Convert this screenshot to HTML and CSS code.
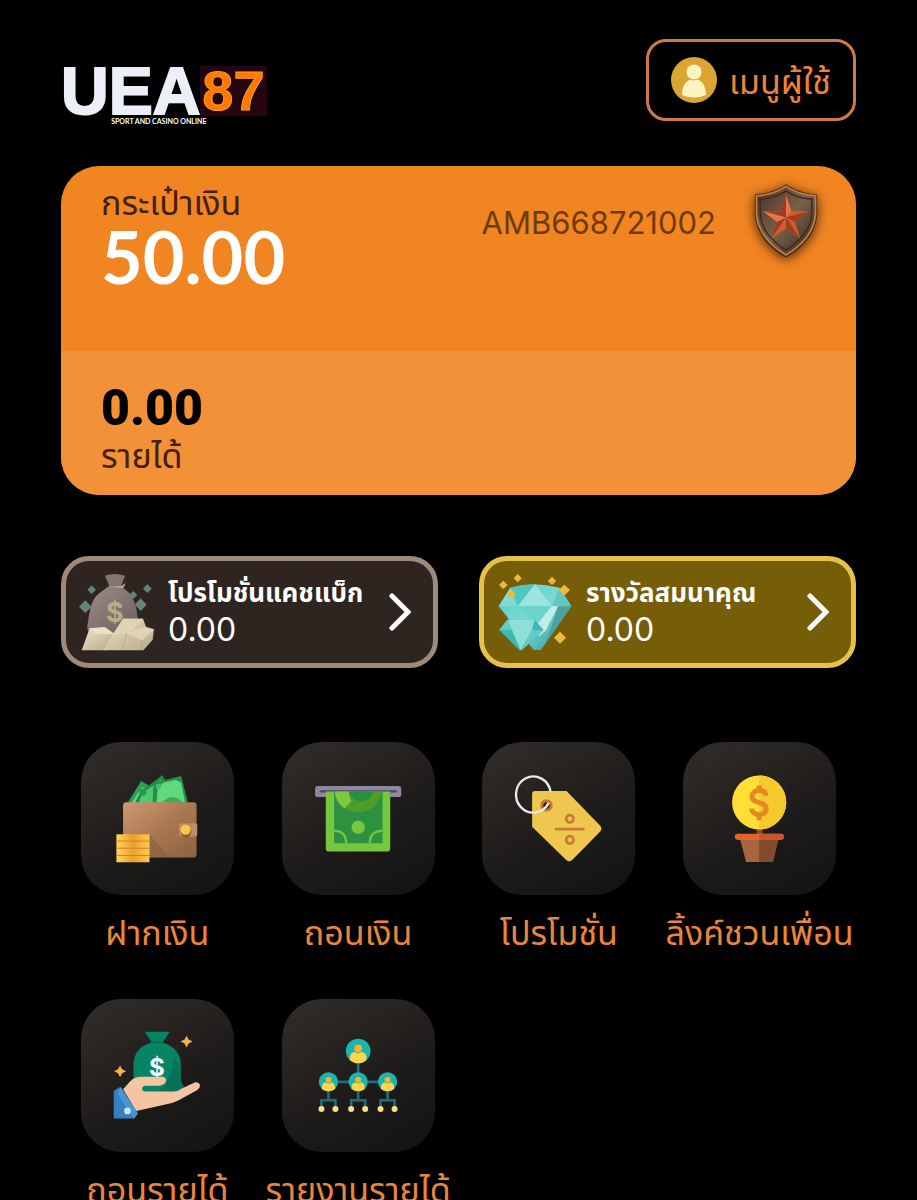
FILE: index.html
```
<!DOCTYPE html>
<html lang="th">
<head>
    <meta charset="UTF-8">
    <meta name="viewport" content="width=device-width, initial-scale=1.0">
    <title>UEA87</title>
    <link rel="stylesheet" href="styles.css">
</head>
<body>
    <header class="top-bar">
        <a class="logo" href="#">
            <span class="logo-name"><span class="logo-uea">UEA</span><span class="logo-num">87</span></span>
            <span class="logo-sub">SPORT AND CASINO ONLINE</span>
        </a>
        <button class="user-menu" type="button">
            <svg class="user-icon" viewBox="0 0 46 46" aria-hidden="true">
                <circle cx="23" cy="23" r="23" fill="#dba531"/>
                <path d="M11 38c0-10 5-16 12-16s12 6 12 16q-12 5-24 0z" fill="#fff3c4"/>
                <circle cx="23" cy="15" r="8" fill="#fff3c4" stroke="#dba531" stroke-width="1"/>
            </svg>
            <span class="user-text">เมนูผู้ใช้</span>
        </button>
    </header>

    <main>
        <section class="wallet">
            <div class="wallet-top">
                <div>
                    <p class="wallet-label">กระเป๋าเงิน</p>
                    <p class="balance">50.00</p>
                </div>
                <div class="member">
                    <span class="member-id">AMB668721002</span>
                    <svg class="rank" viewBox="0 0 200 230" aria-hidden="true">
                        <defs>
                            <linearGradient id="shield" x1="0" y1="0" x2="1" y2="1">
                                <stop offset="0" stop-color="#4b3022"/>
                                <stop offset=".5" stop-color="#776149"/>
                                <stop offset="1" stop-color="#35241b"/>
                            </linearGradient>
                        </defs>
                        <path d="M100 4C75 22 42 32 8 34V90c2 54 40 102 92 130 52-28 90-76 92-130V34C158 32 125 22 100 4z" fill="#4a2917"/>
                        <path d="M100 10C75 27 44 36 13 38V90c2 50 38 94 87 122 49-28 85-72 87-122V38C156 36 125 27 100 10z" fill="url(#shield)" stroke="#bd8050" stroke-width="5"/>
                        <path d="M100 24C78 38 51 46 24 48V90c2 44 32 80 76 108 44-28 74-64 76-108V48C149 46 122 38 100 24z" fill="none" stroke="#40271b" stroke-width="4"/>
                        <path d="M100 36l16 47 50 0-40 31 16 50-42-29-43 29 16-50-41-31h51z" fill="#cf5b31"/>
                        <path d="M100 36v66L83 83zM166 83l-66 19 26 12zM142 164l-42-62v33zM57 164l43-62-27 12zM32 83l68 19-17-19z" fill="#a03c20"/>
                        <path d="M100 36v66l16-19zM32 83l68 19-27 12z" fill="#e87549"/>
                    </svg>
                </div>
            </div>
            <div class="wallet-bottom">
                <p class="income">0.00</p>
                <p class="wallet-label">รายได้</p>
            </div>
        </section>

        <section class="rewards">
            <a class="reward cashback" href="#">
                <svg class="reward-icon" viewBox="70 65 234 240" aria-hidden="true">
                    <defs>
                        <linearGradient id="sack" x1="0" y1="0" x2="1" y2="1">
                            <stop offset="0" stop-color="#9b8c86"/>
                            <stop offset="1" stop-color="#6b5f5b"/>
                        </linearGradient>
                        <linearGradient id="bar" x1="0" y1="0" x2="1" y2="1">
                            <stop offset="0" stop-color="#eee2c5"/>
                            <stop offset="1" stop-color="#b8a98c"/>
                        </linearGradient>
                    </defs>
                    <path d="M111 105l13 13-13 13-13-13zM92 150l19 19-19 19-19-19zM278 102l13 13-13 13-13-13zM258 144l18 19-18 19-18-19zM236 122l12 12-12 12-12-12z" fill="#66827c"/>
                    <path d="M151 76q28-10 60 0l-12 33h-34z" fill="#85756f"/>
                    <path d="M163 107h36q10 8 25 21c22 28 26 70 28 105q-4 17-20 18H110q-14-8-12-24c8-42 8-82 42-103z" fill="url(#sack)"/>
                    <path d="M162 110l45 2 6-15-12 10z" fill="#c3ad94"/>
                    <text x="180" y="215" text-anchor="middle" class="sack-sign">$</text>
                    <path d="M105 234l46-3 28 20-24 49H81z" fill="url(#bar)"/>
                    <path d="M105 234l46-3 28 20-54 1z" fill="#ebe0c4"/>
                    <path d="M205 205h60l9 24 24 8-4 31-28 32H146l26-44z" fill="url(#bar)"/>
                    <path d="M205 205h60l-40 42-53 9zM216 249l52-18 30 6-35 33z" fill="#e0d4b6"/>
                    <path d="M216 249l-14 51M263 270l-6 30" stroke="#b0a185" stroke-width="2" fill="none"/>
                </svg>
                <span class="reward-text">
                    <span class="reward-name">โปรโมชั่นแคชแบ็ก</span>
                    <span class="reward-value">0.00</span>
                </span>
                <svg class="chevron" viewBox="0 0 22 38" aria-hidden="true"><path d="M3 3l16 16L3 35"/></svg>
            </a>
            <a class="reward loyalty" href="#">
                <svg class="reward-icon" viewBox="78 65 234 240" aria-hidden="true">
                    <defs>
                        <linearGradient id="gem" x1="0" y1="0" x2="1" y2="1">
                            <stop offset="0" stop-color="#55c9c4"/>
                            <stop offset=".5" stop-color="#7ddbd5"/>
                            <stop offset="1" stop-color="#278f90"/>
                        </linearGradient>
                    </defs>
                    <path d="M121 112q72-21 147 0l36 56-91 131h-22l-105-131z" fill="url(#gem)"/>
                    <path d="M121 112l22 56 52-66 50 66 23-56 36 56H86z" fill="#7fdcd5"/>
                    <path d="M121 112q36-10 74-10l-52 66z" fill="#52c6c0"/>
                    <path d="M245 168l23-56 36 56z" fill="#64c7c1"/>
                    <path d="M143 168l52-66 50 66z" fill="#9ce5df"/>
                    <path d="M143 168h102l-48 60z" fill="#6dd3cd"/>
                    <path d="M245 168l-48 60 10 30 21-18 36-72z" fill="#c2ece8"/>
                    <path d="M264 168h40l-76 108z" fill="#4aa3a0"/>
                    <path d="M112 208h82l27 31-65 61h-8l-60-61z" fill="#3fb9b6"/>
                    <path d="M112 208l14 31h60l8-31zM126 239l26 61 34-61z" fill="#8fdfd9"/>
                    <path d="M112 208l-24 31h38zM186 239l35 0-67 61z" fill="#62cbc6"/>
                    <path d="M143 71l12 13-12 12-12-12zM100 91l13 13-13 12-13-12zM124 118l14 13-14 14-14-14zM246 79l13 13-13 12-13-12zM283 103l17 16-17 16-17-16zM270 244l18 18-18 18-18-18z" fill="#f1b93c"/>
                </svg>
                <span class="reward-text">
                    <span class="reward-name">รางวัลสมนาคุณ</span>
                    <span class="reward-value">0.00</span>
                </span>
                <svg class="chevron" viewBox="0 0 22 38" aria-hidden="true"><path d="M3 3l16 16L3 35"/></svg>
            </a>
        </section>

        <nav class="menu">
            <a class="menu-item" href="#">
                <svg class="tile" viewBox="32 36 458 458" aria-hidden="true">
                    <defs>
                        <linearGradient id="leather" x1="0" y1="0" x2="1" y2="1">
                            <stop offset="0" stop-color="#cf9973"/>
                            <stop offset=".5" stop-color="#aa7850"/>
                            <stop offset="1" stop-color="#8b6241"/>
                        </linearGradient>
                        <linearGradient id="coins" x1="0" y1="0" x2="1" y2="0">
                            <stop offset="0" stop-color="#ffd75a"/>
                            <stop offset=".5" stop-color="#ec9f2c"/>
                            <stop offset="1" stop-color="#ffca4b"/>
                        </linearGradient>
                    </defs>
                    <path d="M172 218l40-65 70 40v25z" fill="#2d9e52"/>
                    <path d="M184 218l31-48 40 48z" fill="#62d983"/>
                    <path d="M195 218q2-14 20-35l60-48 50 83z" fill="#21894a"/>
                    <path d="M205 218q4-20 20-35l46-35 34 70z" fill="#4cca6c"/>
                    <circle cx="217" cy="186" r="11" fill="#2c9850"/>
                    <path d="M246 218l3-60 83-20 20 80z" fill="#239147"/>
                    <path d="M258 218l4-50q12-2 15-10l39-9q8 7 15 6l13 63z" fill="#5fd97c"/>
                    <path d="M274 218q16-17 34-17 18 2 28 17z" fill="#3cad59"/>
                    <circle cx="264" cy="169" r="8" fill="#4abb68"/>
                    <rect x="158" y="216" width="220" height="166" rx="10" fill="url(#leather)"/>
                    <path d="M237 312l60 70h-60z" fill="#7d563a" opacity=".4"/>
                    <path d="M334 279h40q6 0 6 6v28q0 6-6 6h-40q-9 0-9-9v-22q0-9 9-9z" fill="#bd8d68"/>
                    <circle cx="346" cy="305" r="16" fill="#875a33"/>
                    <circle cx="345" cy="299" r="15" fill="#ffc746"/>
                    <path d="M138 312h99v84h-99z" fill="url(#coins)"/>
                    <path d="M138 332h99M138 354h99M138 376h99" stroke="#ce812a" stroke-width="3"/>
                </svg>
                <span class="menu-label">ฝากเงิน</span>
            </a>
            <a class="menu-item" href="#">
                <svg class="tile" viewBox="36 36 458 458" aria-hidden="true">
                    <rect x="135" y="168" width="258" height="33" rx="8" fill="#8e879f"/>
                    <path d="M152 184h224" stroke="#4e4959" stroke-width="7" stroke-linecap="round"/>
                    <path d="M167 184h193v170q0 10-10 10H177q-10 0-10-10z" fill="#76c63e"/>
                    <path d="M192 184h145v155H192z" fill="#2d9140"/>
                    <path d="M194 184h140c-4 38-36 62-70 62s-64-24-70-62z" fill="#4f9d28"/>
                    <path d="M194 184h43q0 22 7 28l-21 23q-26-17-29-51z" fill="#7dc840"/>
                    <path d="M237 184h72q-6 29-36 29t-36-29z" fill="#259044"/>
                    <circle cx="264" cy="291" r="20" fill="#76c63e"/>
                    <path d="M192 302q36 0 36 37M337 302q-38 0-38 37" fill="none" stroke="#76c63e" stroke-width="7"/>
                </svg>
                <span class="menu-label">ถอนเงิน</span>
            </a>
            <a class="menu-item" href="#">
                <svg class="tile" viewBox="39 36 458 458" aria-hidden="true">
                    <path d="M198 183h94l101 104q7 9 0 17l-84 85q-9 8-18 0L189 290v-98q0-9 9-9z" fill="#efc64e"/>
                    <circle cx="232" cy="226" r="14" fill="#3a2320" stroke="#bd7933" stroke-width="9"/>
                    <path d="M244 184a52 54 0 1 0-5 34" fill="none" stroke="#e9e9ee" stroke-width="7"/>
                    <path d="M239 218l-12 17" stroke="#e9e9ee" stroke-width="5"/>
                    <path d="M257 297h89" stroke="#c77c35" stroke-width="8"/>
                    <circle cx="302" cy="266" r="11" fill="none" stroke="#c77c35" stroke-width="8"/>
                    <circle cx="302" cy="329" r="11" fill="none" stroke="#c77c35" stroke-width="8"/>
                </svg>
                <span class="menu-label">โปรโมชั่น</span>
            </a>
            <a class="menu-item" href="#">
                <svg class="tile" viewBox="73 36 458 458" aria-hidden="true">
                    <path d="M293 290h18v30h-18z" fill="#8e4b2d"/>
                    <circle cx="301" cy="217" r="81" fill="#ffdf35"/>
                    <path d="M301 136a81 81 0 0 1 0 162z" fill="#f6c92d"/>
                    <path d="M321 197c0-12-9-16-20-16-13 0-21 7-21 18 0 25 42 12 42 37 0 11-9 17-21 17-13 0-22-7-22-18M301 166v16M301 252v18" fill="none" stroke="#e48920" stroke-width="15"/>
                    <path d="M243 324h116l-17 71h-80z" fill="#a76540"/>
                    <path d="M301 324h58l-17 71h-41z" fill="#854a2c"/>
                    <rect x="228" y="311" width="147" height="18" rx="9" fill="#e2642c"/>
                    <path d="M301 311h65a9 9 0 0 1 0 18h-65z" fill="#c8562d"/>
                </svg>
                <span class="menu-label">ลิ้งค์ชวนเพื่อน</span>
            </a>
            <a class="menu-item" href="#">
                <svg class="tile" viewBox="32 28 458 458" aria-hidden="true">
                    <path d="M223 126h75l-22 32q55 17 55 68v45q2 13 16 28l-44 10H210q-24-6-21-32v-51q0-53 55-68z" fill="#078365"/>
                    <path d="M331 226v45q2 13 16 28l-44 10H258q46-28 52-106z" fill="#087158"/>
                    <path d="M244 158h32" stroke="#06654f" stroke-width="4"/>
                    <text x="259" y="258" text-anchor="middle" class="bag-sign">$</text>
                    <path d="M158 298l20-22q14-15 34-15h67q10 5 7 15-5 11-23 12h-38q-10 1-10 9 0 8 10 8h83q14 0 28-10l36-17q12-4 16 7 1 10-9 16l-56 31q-14 7-32 10l-94 21z" fill="#f5c5a2"/>
                    <path d="M130 303l20-12 52 80-11 15h-61z" fill="#357fc1"/>
                    <path d="M150 291l52 80-11 15-50-73z" fill="#4697d5"/>
                    <circle cx="171" cy="363" r="10" fill="#c8e8ff"/>
                    <path d="M348 138l6 11 12 6-12 6-6 12-6-12-12-6 12-6zM149 227l6 11 12 6-12 6-6 12-6-12-12-6 12-6z" fill="#f4b44a"/>
                </svg>
                <span class="menu-label">ถอนรายได้</span>
            </a>
            <a class="menu-item" href="#">
                <svg class="tile" viewBox="66 28 458 458" aria-hidden="true">
                    <defs>
                        <g id="person">
                            <circle r="37" fill="#19b5ae"/>
                            <path d="M-25 27q-2-22 14-25h22q16 3 14 25-25 18-50 0z" fill="#fad54d"/>
                            <circle cy="-8" r="13" fill="#f3b63b" stroke="#159d99" stroke-width="2"/>
                        </g>
                        <g id="branch">
                            <path d="M0 28v27M-21 80V55h42v25" fill="none" stroke="#216d7d" stroke-width="8"/>
                            <circle cx="-21" cy="81" r="9" fill="#f8df83"/>
                            <circle cx="21" cy="81" r="9" fill="#f8df83"/>
                        </g>
                    </defs>
                    <path d="M294 220v56M205 276h177" stroke="#216d7d" stroke-width="8"/>
                    <use href="#branch" x="205" y="276"/>
                    <use href="#branch" x="294" y="276"/>
                    <use href="#branch" x="382" y="276"/>
                    <use href="#person" x="294" y="184"/>
                    <use href="#person" transform="translate(205 276) scale(.78)"/>
                    <use href="#person" transform="translate(294 276) scale(.78)"/>
                    <use href="#person" transform="translate(382 276) scale(.78)"/>
                </svg>
                <span class="menu-label">รายงานรายได้</span>
            </a>
        </nav>
    </main>
</body>
</html>
```

FILE: styles.css
```
* {
    box-sizing: border-box;
}
body {
    font-family: Inter, "Noto Sans Thai", "Noto Sans", sans-serif;
    margin: 0;
    padding: 39px 61px 0;
    background-color: #000;
    color: #fff;
}
p {
    margin: 0;
}
a {
    color: inherit;
    text-decoration: none;
}
.top-bar {
    display: flex;
    justify-content: space-between;
    align-items: flex-start;
}
.logo {
    display: flex;
    flex-direction: column;
    align-items: center;
    padding-top: 27px;
    font-family: "Liberation Sans", Arial, sans-serif;
    font-weight: bold;
}
.logo-name {
    display: flex;
    align-items: center;
    height: 50px;
}
.logo-uea {
    font-size: 66px;
    line-height: 50px;
    color: #eceef8;
    -webkit-text-stroke: 2px #eceef8;
}
.logo-num {
    padding: 0 2px;
    font-family: "Liberation Sans Narrow", "Liberation Sans", sans-serif;
    font-size: 56px;
    line-height: 50px;
    color: #ff7900;
    background-color: #25050f;
    -webkit-text-stroke: 1px #ff9d1c;
}
.logo-sub {
    padding-right: 10px;
    font-family: Lato, sans-serif;
    font-size: 7px;
    line-height: 10px;
}
.user-menu {
    display: flex;
    align-items: center;
    justify-content: space-between;
    width: 210px;
    height: 82px;
    padding: 0 22px;
    border: 3px solid #cf7a45;
    border-radius: 20px;
    background: none;
    color: #ec8338;
    font-family: inherit;
    font-size: 34px;
}
.user-text {
    padding-top: 6px;
}
.user-icon {
    width: 46px;
    height: 46px;
}
.wallet {
    margin-top: 40px;
    border-radius: 38px;
    overflow: hidden;
    background-color: #f18522;
    color: #43200b;
}
.wallet-top {
    display: flex;
    justify-content: space-between;
    height: 185px;
    padding: 16px 36px 0 40px;
}
.wallet-label {
    font-size: 34px;
    line-height: 42px;
}
.balance {
    font-family: Lato, sans-serif;
    font-size: 72px;
    font-weight: bold;
    line-height: 64px;
    color: #fff;
}
.member {
    display: flex;
    align-items: center;
    gap: 36px;
    height: 80px;
}
.member-id {
    font-size: 31px;
    color: #70390c;
}
.rank {
    width: 68px;
    height: 78px;
    filter: drop-shadow(0 2px 6px #4b2203);
}
.wallet-bottom {
    height: 144px;
    padding: 30px 40px 0;
    background-color: #f29138;
}
.income {
    font-family: Roboto, sans-serif;
    font-size: 50px;
    font-weight: 900;
    line-height: 54px;
    color: #000;
}
.rewards {
    display: grid;
    grid-template-columns: 1fr 1fr;
    gap: 41px;
    margin-top: 61px;
}
.reward {
    display: flex;
    align-items: center;
    height: 112px;
    padding: 0 22px 0 12px;
    border: 5px solid;
    border-radius: 28px;
}
.cashback {
    background-color: #2e2521;
    border-color: #9f8979;
}
.loyalty {
    background-color: #765d08;
    border-color: #e5c14a;
}
.reward-icon {
    width: 78px;
    height: 80px;
}
.reward-text {
    display: flex;
    flex: 1;
    flex-direction: column;
    margin-left: 12px;
    color: #fff;
    white-space: nowrap;
}
.reward-name {
    font-size: 26px;
    font-weight: bold;
    line-height: 36px;
}
.reward-value {
    font-size: 32px;
    line-height: 38px;
}
.sack-sign {
    font-size: 80px;
    font-weight: bold;
    fill: #b9ad89;
}
.chevron {
    width: 22px;
    height: 38px;
    fill: none;
    stroke: #fff;
    stroke-width: 5;
    stroke-linecap: round;
}
.menu {
    display: grid;
    grid-template-columns: repeat(4, 1fr);
    row-gap: 41px;
    margin: 74px -4px 0;
}
.menu-item {
    display: flex;
    flex-direction: column;
    align-items: center;
    gap: 13px;
}
.tile {
    width: 153px;
    height: 153px;
    border-radius: 40px;
    background: linear-gradient(150deg, #322d2a, #1c1a19 60%, #141313);
}
.bag-sign {
    font-size: 72px;
    font-weight: bold;
    fill: #fff;
}
.menu-label {
    font-size: 34px;
    line-height: 50px;
    color: #e9863c;
    white-space: nowrap;
}
```
